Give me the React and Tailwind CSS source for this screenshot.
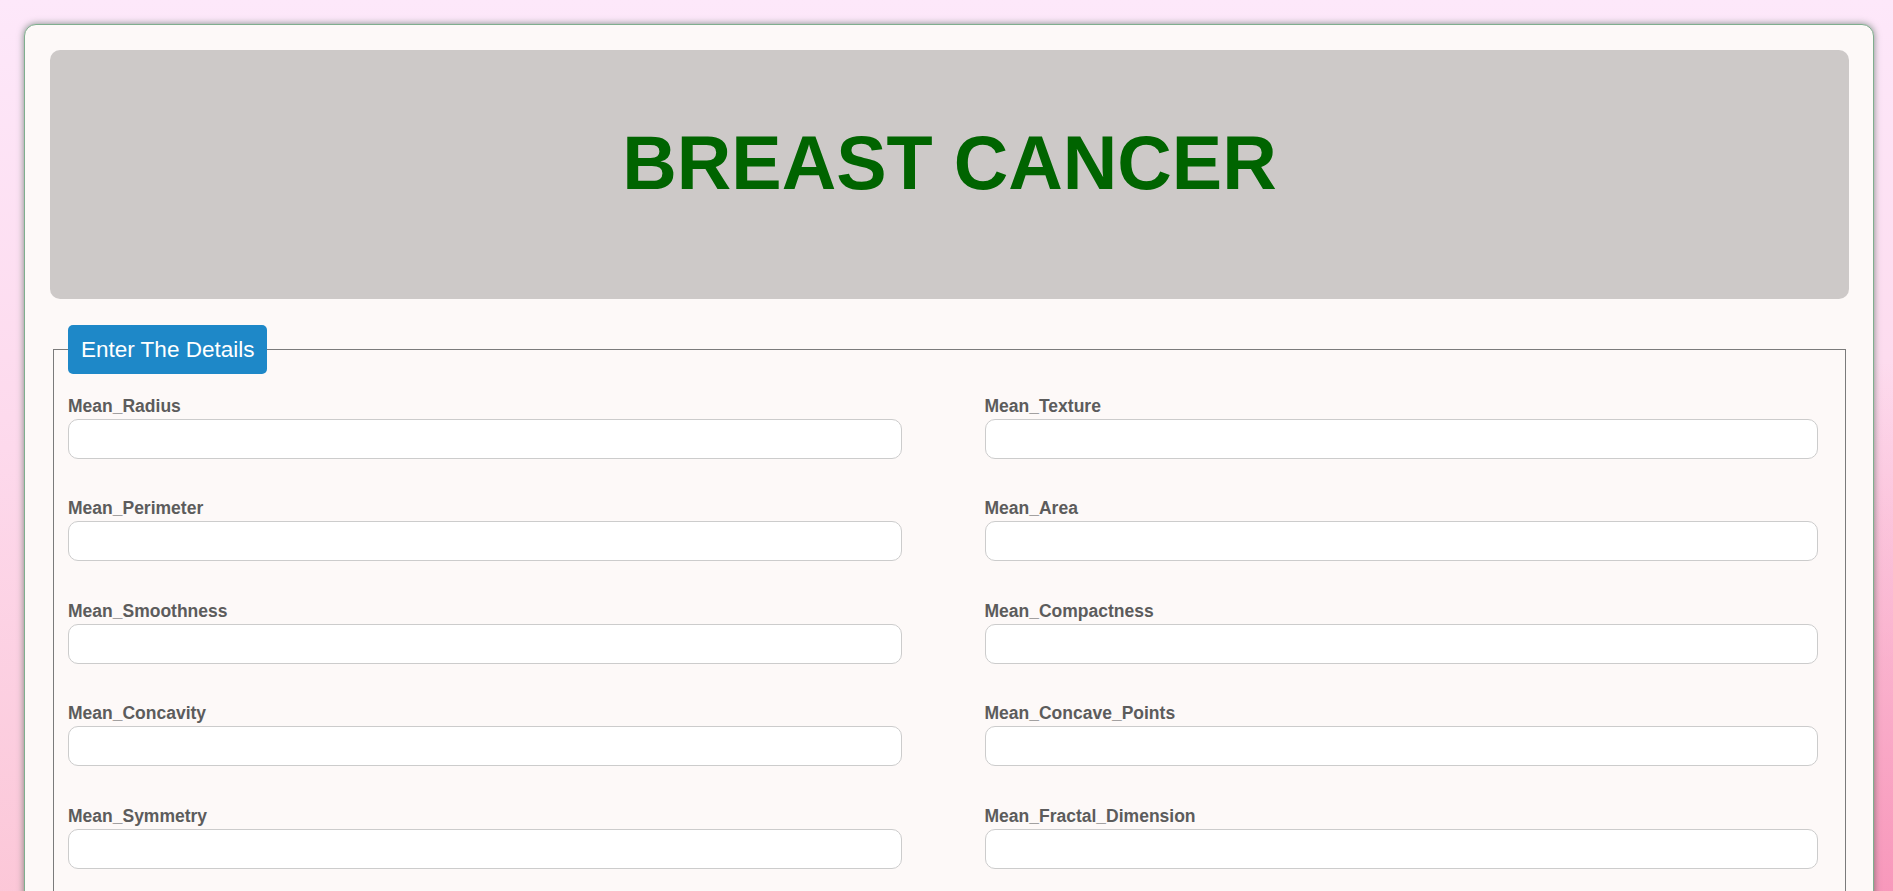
import React from "react";

const fields = [
  "Mean_Radius",
  "Mean_Texture",
  "Mean_Perimeter",
  "Mean_Area",
  "Mean_Smoothness",
  "Mean_Compactness",
  "Mean_Concavity",
  "Mean_Concave_Points",
  "Mean_Symmetry",
  "Mean_Fractal_Dimension",
];

const App = () => {
  return (
    <div className="min-h-screen w-full pt-[24px] pb-[24px] font-['Liberation_Sans',Arial,sans-serif] bg-[radial-gradient(ellipse_at_100%_100%,#f78fb6_0%,rgba(248,150,186,0)_45%),linear-gradient(to_bottom,#fde8fa_0%,#fdd9ec_45%,#fbc3d3_100%)]">
      <div className="ml-[24px] w-[1850px] rounded-[12px] border border-[#7fae8e] bg-[#fdf9f8] pl-[25px] pr-[24px] pt-[25px] pb-[40px] shadow-[0_0_7px_rgba(40,80,55,0.6)]">
        {/* header */}
        <div className="h-[249px] rounded-[10px] bg-[#cdc9c8] pt-[76px] text-center">
          <h1 className="text-[75.5px] font-bold leading-none text-[#006400]">BREAST CANCER</h1>
        </div>

        <fieldset className="mx-[3px] mt-[26px] border border-[#7b7b7b] pl-[14px] pr-[27px] pt-[22px] pb-[60px]">
          <legend className="h-[49px] rounded-[5px] bg-[#1e88c8] px-[13px] text-[22.5px] leading-[49px] text-white">
            Enter The Details
          </legend>

          <div className="grid grid-cols-2 gap-x-[83px] gap-y-[39.4px]">
            {fields.map((name) => (
              <div key={name} className="flex flex-col">
                <label className="text-[17.5px] font-bold leading-[20px] text-[#5c5c5c]">{name}</label>
                <input
                  type="text"
                  name={name}
                  className="mt-[3px] h-[40px] w-full rounded-[10px] border border-[#cccccc] bg-white px-3 text-[16px] outline-none"
                />
              </div>
            ))}
          </div>
        </fieldset>
      </div>
    </div>
  );
};

export default App;
